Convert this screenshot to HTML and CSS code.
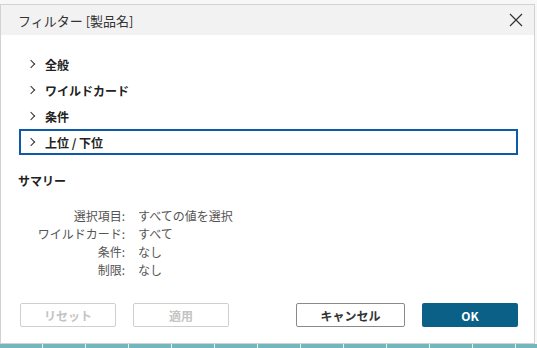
FILE: index.html
```html
<!DOCTYPE html>
<html lang="ja">
<head>
    <meta charset="UTF-8">
    <meta name="viewport" content="width=device-width, initial-scale=1.0">
    <title>フィルター [製品名]</title>
    <link rel="stylesheet" href="styles.css">
</head>
<body>
    <div class="dialog">
        <div class="title-bar">
            <span class="title">フィルター [製品名]</span>
            <button class="close-btn" title="閉じる">
                <svg width="14" height="14" viewBox="0 0 14 14">
                    <path d="M1 1 L13 13 M13 1 L1 13" stroke="#333" stroke-width="1.2" fill="none"/>
                </svg>
            </button>
        </div>

        <div class="content">
            <div class="sections">
                <div class="section-row"><span class="chevron"></span><span>全般</span></div>
                <div class="section-row"><span class="chevron"></span><span>ワイルドカード</span></div>
                <div class="section-row"><span class="chevron"></span><span>条件</span></div>
                <div class="section-row selected"><span class="chevron"></span><span>上位 / 下位</span></div>
            </div>

            <div class="summary-title">サマリー</div>
            <div class="summary">
                <span class="label">選択項目:</span><span>すべての値を選択</span>
                <span class="label">ワイルドカード:</span><span>すべて</span>
                <span class="label">条件:</span><span>なし</span>
                <span class="label">制限:</span><span>なし</span>
            </div>

            <div class="actions">
                <div class="left-actions">
                    <button class="btn disabled">リセット</button>
                    <button class="btn disabled">適用</button>
                </div>
                <div class="right-actions">
                    <button class="btn cancel-btn">キャンセル</button>
                    <button class="btn ok-btn">OK</button>
                </div>
            </div>
        </div>
    </div>
    <div class="backdrop-strip"></div>
</body>
</html>
```

FILE: styles.css
```css
* {
    margin: 0;
    padding: 0;
    box-sizing: border-box;
}

body {
    font-family: "Noto Sans CJK JP", "Noto Sans", sans-serif;
    background: #f7f7f7;
    width: 537px;
    height: 348px;
    overflow: hidden;
    padding-top: 4px;
}

.dialog {
    width: 535px;
    height: 340px;
    background: white;
    border: 1px solid #d2d2d2;
}

.title-bar {
    height: 30px;
    background: #f2f2f2;
    display: flex;
    align-items: center;
    justify-content: space-between;
    padding-left: 17px;
    padding-right: 10px;
}

.title {
    font-size: 13px;
    color: #333;
}

.close-btn {
    background: none;
    border: none;
    width: 16px;
    height: 16px;
    display: flex;
    align-items: center;
    justify-content: center;
}

.content {
    padding: 16px 17px 0 17px;
}

.sections {
    display: flex;
    flex-direction: column;
}

.section-row {
    height: 26px;
    width: 499px;
    margin-left: 1px;
    border: 2px solid transparent;
    display: flex;
    align-items: center;
    padding-left: 7px;
    font-size: 12px;
    font-weight: 600;
    color: #222;
}

.section-row.selected {
    border-color: #0d5aa6;
}

.chevron {
    width: 6px;
    height: 6px;
    border-top: 1px solid #333;
    border-right: 1px solid #333;
    transform: rotate(45deg);
    margin-right: 11px;
}

.summary-title {
    margin-top: 17px;
    height: 18px;
    line-height: 18px;
    font-size: 12px;
    font-weight: 600;
    color: #222;
}

.summary {
    margin-top: 16px;
    display: grid;
    grid-template-columns: 107px auto;
    column-gap: 13px;
    grid-auto-rows: 18px;
    align-items: center;
    font-size: 12px;
    color: #555;
}

.summary .label {
    text-align: right;
}

.actions {
    margin-top: 25px;
    display: flex;
    justify-content: space-between;
    padding: 0 0 0 2px;
    width: 500px;
}

.left-actions,
.right-actions {
    display: flex;
    gap: 17px;
}

.btn {
    height: 24px;
    width: 96px;
    border-radius: 2px;
    font-family: inherit;
    font-size: 12px;
    font-weight: 600;
    background: white;
}

.btn.disabled {
    border: 1px solid #cfcfcf;
    color: #c4c4c4;
}

.cancel-btn {
    width: 109px;
    border: 1px solid #8a8a8a;
    color: #333;
}

.ok-btn {
    border: none;
    background: #0b6088;
    color: white;
}

.backdrop-strip {
    height: 4px;
    background: repeating-linear-gradient(90deg, #74b6bd 0, #74b6bd 42px, #e6f0f0 42px, #e6f0f0 43px);
}
```
